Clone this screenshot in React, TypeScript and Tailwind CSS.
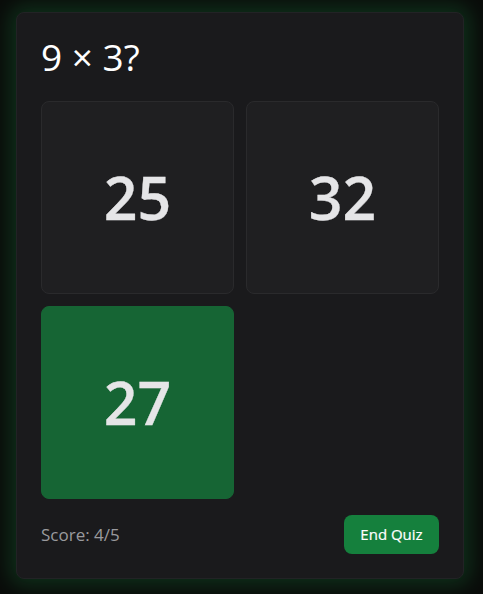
import React from "react";

export default function App() {
  const options = [
    { v: 25, correct: false },
    { v: 32, correct: false },
    { v: 27, correct: true },
  ];
  return (
    <div
      className="w-[483px] h-[594px] bg-[#0a0c0a] pl-4 pt-3"
      style={{ fontFamily: '"Open Sans", "Noto Sans", sans-serif' }}
    >
      <div className="w-[448px] h-[567px] rounded-lg border border-[#222325] bg-[#1a1a1c] p-6 flex flex-col shadow-[0_0_20px_6px_rgba(34,197,94,0.2)]">
        <h1 className="text-[37px] leading-[40px] text-white font-normal mb-6">9 × 3?</h1>
        <div className="grid grid-cols-2 gap-3">
          {options.map((o) => (
            <button
              key={o.v}
              className={
                o.correct
                  ? "h-[193px] rounded-lg bg-[#166534] border border-[#166534] flex items-center justify-center text-[59px] font-semibold text-[#e5e5e7] [-webkit-text-stroke:0.3px_#e5e5e7]"
                  : "h-[193px] rounded-lg bg-[#1f1f21] border border-[#2a2a2c] flex items-center justify-center text-[59px] font-semibold text-[#e5e5e7] [-webkit-text-stroke:0.3px_#e5e5e7]"
              }
            >
              {o.v}
            </button>
          ))}
        </div>
        <div className="mt-4 flex items-center justify-between">
          <span className="text-[17px] text-[#9a9a9e]">Score: 4/5</span>
          <button className="h-[39px] w-[95px] rounded-lg bg-[#15803d] text-white text-[15px] font-medium [-webkit-text-stroke:0.2px_white]">
            End Quiz
          </button>
        </div>
      </div>
    </div>
  );
}
